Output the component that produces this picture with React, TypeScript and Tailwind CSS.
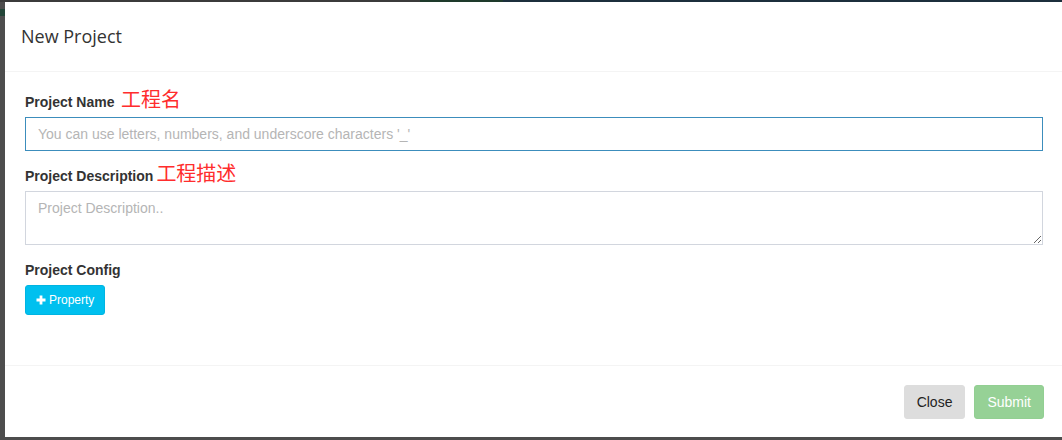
import React from "react"

const arial = { fontFamily: '"Liberation Sans", Arial, sans-serif' }

function PlusIcon() {
  return (
    <svg width="10" height="10" viewBox="0 0 10 10" className="mr-[3px] shrink-0" aria-hidden="true">
      <path d="M3.6 0.5h2.8v3.1h3.1v2.8H6.4v3.1H3.6V6.4H0.5V3.6h3.1z" fill="#fff" />
    </svg>
  )
}

function Label({ text, hint, space = true }: { text: string; hint?: string; space?: boolean }) {
  return (
    <label className="block h-[20px] leading-[20px] mb-[5px] text-[14px] font-bold text-[#333]">
      {text}
      {hint && (
        <span
          className={`font-normal text-[20px] leading-[14px] text-[#ff2d2d] ${space ? "ml-[1px]" : "ml-[3px]"}`}
          style={{ fontFamily: '"Liberation Sans", "Noto Sans CJK SC", sans-serif' }}
        >
          {space ? " " : ""}
          {hint}
        </span>
      )}
    </label>
  )
}

export default function App() {
  return (
    <div className="relative w-[1062px] h-[440px] overflow-hidden bg-[#4d4d4d]" style={arial}>
      {/* page showing through the backdrop */}
      <div className="flex h-[2px]">
        <div className="w-[420px] bg-[#3b3b3b]" />
        <div className="w-[83px] bg-[#1e3a2b]" />
        <div className="flex-1 bg-[#1c2f3c]" />
      </div>
      <div className="absolute left-0 top-[9px] w-[5px] h-[7px] bg-[#234538]" />

      <div className="ml-[5px] w-[1058px] h-[435px] bg-white flex flex-col">
        <div className="h-[70px] border-b border-[#f4f4f4] flex items-center pl-[16px] pb-[1px]">
          <h4 className="text-[18px] text-[#333]" style={{ fontFamily: '"Open Sans", sans-serif' }}>
            New Project
          </h4>
        </div>

        <div className="px-[20px] pt-[20px] pb-[50px] border-b border-[#f4f4f4]">
          <div className="mb-[15px]">
            <Label text="Project Name" hint="工程名" />
            <input
              className="block w-full h-[34px] px-[12px] border border-[#3c8dbc] text-[14px] text-[#555] outline-none placeholder:text-[#b5b5b5]"
              placeholder="You can use letters, numbers, and underscore characters '_'"
            />
          </div>
          <div className="mb-[15px]">
            <Label text="Project Description" hint="工程描述" space={false} />
            <textarea
              className="block w-full h-[54px] px-[12px] py-[6px] border border-[#d2d6de] text-[14px] text-[#555] outline-none placeholder:text-[#b5b5b5]"
              placeholder="Project Description.."
            />
          </div>
          <div>
            <Label text="Project Config" />
            <button
              type="button"
              className="flex items-center h-[30px] px-[10px] rounded-[3px] border border-[#00b4e2] bg-[#00c0ef] text-[12px] text-white"
            >
              <PlusIcon />
              Property
            </button>
          </div>
        </div>

        <div className="flex justify-end gap-[9px] pt-[19px] pr-[19px]">
          <button
            type="button"
            className="h-[34px] px-[12px] rounded-[3px] border border-[#dddddd] bg-[#dddddd] text-[14px] text-[#222]"
          >
            Close
          </button>
          <button
            type="button"
            disabled
            className="h-[34px] px-[12px] rounded-[3px] border border-[#92cf92] bg-[#96d196] text-[14px] text-white"
          >
            Submit
          </button>
        </div>
      </div>
    </div>
  )
}
